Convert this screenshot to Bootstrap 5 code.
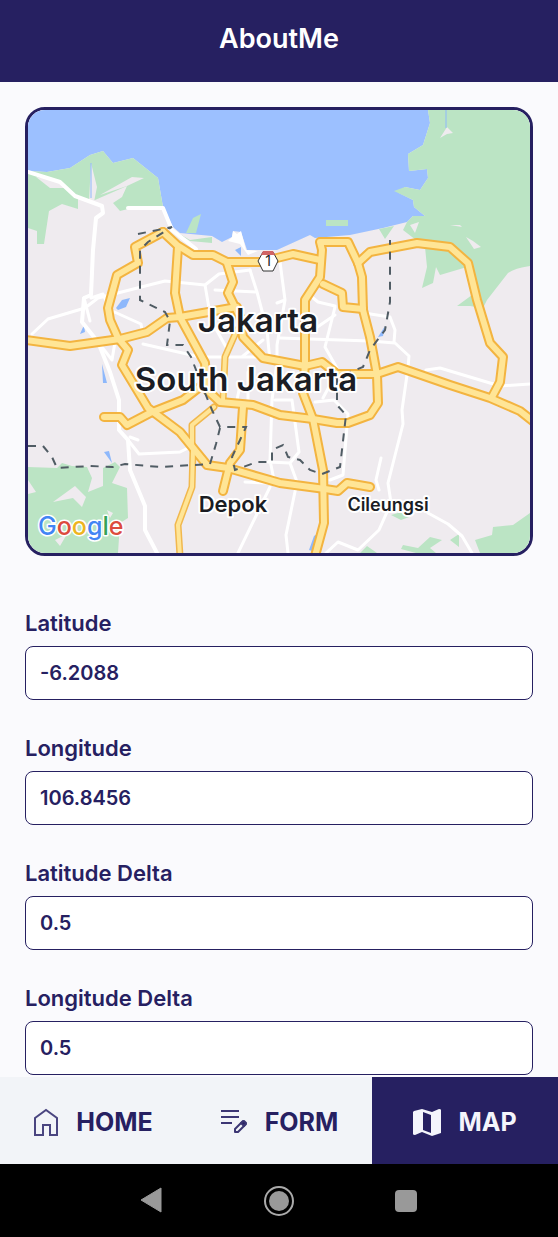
<!DOCTYPE html>
<html lang="en">
<head>
<meta charset="utf-8">
<meta name="viewport" content="width=device-width, initial-scale=1">
<title>AboutMe</title>
<link href="https://cdn.jsdelivr.net/npm/bootstrap@5.3.0/dist/css/bootstrap.min.css" rel="stylesheet">
<style>
:root { --navy: #262061; --page: #fafafd; --bar: #f2f4f8; }
body { font-family: Inter, "Noto Sans", sans-serif; color: var(--navy); background: var(--page); }
.app-header { background: var(--navy); height: 82px; padding-bottom: 4px; }
.app-header h1 { font-size: 27px; line-height: 32px; font-weight: 600; }
.screen { padding: 25px 25px 0; min-height: 0; }
.map-frame { border: 3px solid var(--navy); border-radius: 20px; margin-bottom: 55px; }
.map-frame svg { width: 100%; height: auto; }
.fields { gap: 36px; }
.form-label { font-size: 22px; line-height: 24px; font-weight: 600; margin-bottom: 11px; }
.form-control, .form-control:focus { color: var(--navy); background: #fff; border-color: var(--navy); border-radius: 8px; height: 54px; padding: 0 14px; font-size: 20px; font-weight: 600; }
.tabs { background: var(--bar); height: 87px; }
.tabs a { color: var(--navy); font-size: 25px; line-height: 32px; font-weight: 700; gap: 17px; padding-top: 2px; }
.tabs a.active { background: var(--navy); color: #f4f5fb; }
.system-bar { height: 73px; padding: 0 137px; }
.place { font-weight: 600; fill: #1b1d24; stroke: #fff; stroke-width: 4px; stroke-linejoin: round; paint-order: stroke; }
</style>
</head>
<body>
<div class="d-flex flex-column vh-100">
<header class="app-header flex-shrink-0 d-flex align-items-center justify-content-center text-white">
  <h1 class="m-0">AboutMe</h1>
</header>

<main class="screen flex-grow-1 overflow-auto">
  <div class="map-frame overflow-hidden">
    <svg class="d-block" viewBox="28 110 502 443" role="img" aria-label="Map of Jakarta">
      <defs>
        <g id="highways">
          <path d="M163 232L135 247L138 263L117 275L108 308L110 320L118 338L128 350L122 365L148 408L180 432L207 465L228 468L280 483L325 489L338 491L347 483L370 487"/>
          <path d="M163 232L177 245L193 255H213L227 262H262L277 258L293 254L320 260"/>
          <path d="M358 263L348 242H320L322 250L320 277L305 300V363L303 393L313 419L323 470L324 523L315 556"/>
          <path d="M358 263L370 252L417 243L450 247L468 263L477 300L490 343L503 357L500 382L492 397"/>
          <path d="M178 247L175 293L180 317L205 363L207 390L220 402L253 405L280 415L313 419L337 423H348L370 415L378 403L377 375L373 353L370 337L363 310L362 277L358 263"/>
          <path d="M26 340L70 346L120 339L147 332L167 318L180 317L237 307"/>
          <path d="M227 263L233 282L228 293L240 317L243 337L263 358L305 366L322 362L337 374L377 374L398 367L450 385L490 398L520 411L534 422"/>
          <path d="M323 284L342 293L343 307L363 309"/>
          <path d="M104 417H120L127 425L150 413L183 400L205 383"/>
          <path d="M243 407L240 450L230 463L223 491"/>
        </g>
        <g id="byways"><path d="M214 407L192 425V443L193 450L192 487L178 525L180 556M237 330L225 357L223 400"/></g>
      </defs>
      <path fill="#efebef" d="M28 110H530V553H28z"/>
      <path fill="#9cc0ff" d="M28 110V171L47 172L70 168L90 155L103 151L113 163L133 158L158 178L163 207L173 227L180 233L212 236L222 242L232 237L233 231L241 232L247 250H277L310 235L315 238L350 235L383 228L407 222L413 216H425L414 207L413 200L399 193L405 187L420 190L428 178L427 169L409 171L408 154L423 145L430 123L428 110z"/>
      <g fill="#bbe4c4">
        <path d="M28 171L47 172L70 168L90 155L103 151L113 163L133 158L158 178L163 207L140 206L120 211L113 203L122 197L127 186L95 200L78 198V209L62 204L49 211L44 244H37V231L28 228z"/>
        <path d="M428 110H530V266Q515 268 508 273L487 300L483 308L470 306H457L472 295L467 267L440 275L436 267L433 283L422 288L427 267L425 247L403 230L407 222L413 216H425L414 207L413 200L394 191L405 187L420 190L428 178L427 169L409 171L408 154L423 145L430 123z"/>
        <path d="M28 467L57 468L62 463L72 466L87 467L92 478L88 492L103 486V468L115 462L120 467L112 483L127 488L128 518L120 523L118 553H28z"/>
        <path d="M530 513L513 525L493 527L492 535L475 540L480 553H530zM391 515L405 511L412 516L401 520zM416 553L401 549L403 545L418 548L430 537L442 540L430 548L436 553zM450 540L459 534V547zM360 553L367 546L377 553z"/>
        <path d="M186 233L193 218L201 214L196 233zM176 232L190 240L212 237V243L190 241zM326 220h22v6h-22zM379 229L394 226L385 239z"/>
      </g>
      <g fill="#efebef">
        <path d="M91 163L97 187L94 202H89zM100 195L132 177L144 178L127 186zM36 177L60 180L66 188H50zM53 502L75 486L86 497L82 507L73 498zM28 480L36 492L28 494zM107 510L113 513L110 518zM55 540L67 534L60 546zM447 127L453 133L447 134L440 138zM410 225L419 222L415 233zM466 237L473 241L481 247L474 249zM450 225L460 225L462 227z"/>
      </g>
      <path fill="#8eb8fb" d="M116 308L122 300L130 298L126 307L118 310zM80 334L84 325L85 332zM102 364L107 383H103zM104 452L109 451L112 463zM235 250L241 247V256zM378 337L385 326L383 336zM309 550L314 536L317 534L312 551z"/>
      <path fill="none" stroke="#8eb8fb" d="M91 163V198M446 110V128"/>
      <g fill="none" stroke="#fff" stroke-width="3" stroke-linejoin="round" stroke-linecap="round">
        <path stroke-width="4" d="M28 172L60 182L75 196L102 206L103 213L96 218L93 250L91 295L84 298L82 322L98 342L110 372L119 400V430L128 440L130 470L145 506V530L157 553"/>
        <path d="M32 334L48 319L85 308L98 298L165 281L205 285L219 274L250 270M91 298L103 294L110 310L141 324L143 336M143 344L200 357H267"/>
        <path d="M84 298L90 321M98 342L112 360L115 342M128 440L139 454L180 452L190 447M130 437L138 440"/>
        <path d="M205 285L211 320L226 347M215 290L257 292M250 270L257 292L267 330L270 362M280 262L285 300L277 303M285 300L277 345V360M307 293L318 302L335 306M335 307L325 347L338 370L323 398M280 338L370 341L395 343L409 356L408 368L402 410L403 424L388 483L391 503L379 530L358 550L338 542L326 553"/>
        <path d="M240 385L236 405M248 372V400M263 340L243 356M277 362L272 400M272 400L270 460L275 485M275 400L292 400L299 452L290 463L297 482L286 535L288 553M245 482L268 483M268 462L290 463M364 313L390 317L395 330L394 342M426 370L440 368L500 386L530 384M381 458L376 480L379 490M270 487L238 553M428 513L448 524L462 536L472 553M315 402L334 400L348 414L343 475L330 480M313 330L335 315"/>
        <path stroke-width="4" d="M128 208L163 208L172 230L196 249"/>
      </g>
      <path fill="#fff" d="M232 237L233 231L237 234L241 231L246 250L258 251L248 255L240 244L228 241z"/>
      <g fill="none" stroke-linejoin="round" stroke-linecap="round">
        <use href="#byways" stroke="#f1b84e" stroke-width="7"/>
        <use href="#highways" stroke="#f3b440" stroke-width="10"/>
        <use href="#byways" stroke="#ffe596" stroke-width="4"/>
        <use href="#highways" stroke="#ffe596" stroke-width="6"/>
      </g>
      <path fill="none" stroke="#505c64" stroke-width="2" stroke-dasharray="8 7" d="M28 446H43L52 457L57 468L90 466L113 467L125 464L160 467L210 464L216 444L220 428M138 234L172 227L148 242L140 250V300L165 312L170 321L167 345H183L191 357L205 393L212 410L220 427H246L240 440L232 457L235 470L257 462H272V450L283 445L288 457L300 460L310 470L322 474L340 467L346 415L337 405V377L363 367L370 350L385 330L390 302V240"/>
      <path d="M263 252L273 252L278 261L273 271H263L258 261z" fill="#fff" stroke="#333" stroke-linejoin="round"/>
      <path fill="#d16464" d="M263 251H273L275 255H261z"/>
      <g text-anchor="middle">
        <text x="268" y="266" font-size="14" fill="#222">1</text>
        <text class="place" x="258" y="332" font-size="33">Jakarta</text>
        <text class="place" x="246" y="391" font-size="33">South Jakarta</text>
        <text class="place" x="233" y="512" font-size="22">Depok</text>
        <text class="place" x="388" y="511" font-size="18">Cileungsi</text>
      </g>
      <text x="38" y="535" font-size="25" font-weight="500" stroke="#fff" stroke-width="3" paint-order="stroke" stroke-linejoin="round"><tspan fill="#4285f4">G</tspan><tspan fill="#dc4b3e">o</tspan><tspan fill="#edb51f">o</tspan><tspan fill="#4285f4">g</tspan><tspan fill="#34a259">l</tspan><tspan fill="#dc4b3e">e</tspan></text>
    </svg>
  </div>

  <form class="fields d-flex flex-column">
    <div><label class="form-label d-block" for="lat">Latitude</label><input class="form-control" id="lat" type="text" value="-6.2088"></div>
    <div><label class="form-label d-block" for="lng">Longitude</label><input class="form-control" id="lng" type="text" value="106.8456"></div>
    <div><label class="form-label d-block" for="latd">Latitude Delta</label><input class="form-control" id="latd" type="text" value="0.5"></div>
    <div><label class="form-label d-block" for="lngd">Longitude Delta</label><input class="form-control" id="lngd" type="text" value="0.5"></div>
  </form>
</main>

<nav class="tabs nav nav-fill flex-nowrap flex-shrink-0" aria-label="Main">
  <a class="col d-flex align-items-center justify-content-center text-decoration-none" href="#home">
    <svg width="26" height="28" viewBox="0 0 26 28" fill="none" stroke="#4a4580" stroke-width="2" aria-hidden="true"><path d="M2 10L13 2L24 10V27H17V17H10V27H2z"/></svg>HOME</a>
  <a class="col d-flex align-items-center justify-content-center text-decoration-none" href="#form">
    <svg width="28" height="26" viewBox="0 0 28 26" fill="none" stroke="#3c3674" stroke-width="2" stroke-linejoin="round" aria-hidden="true"><path d="M1 2H19M1 8H19M1 14H12M15 23V20L23 12L26 15L18 23z"/><path fill="currentColor" d="M21 14L24 12L26 14L24 17z"/></svg>FORM</a>
  <a class="active col d-flex align-items-center justify-content-center text-decoration-none" href="#map" aria-current="page">
    <svg width="28" height="28" viewBox="0 0 28 28" aria-hidden="true"><path fill="currentColor" fill-rule="evenodd" d="M1 3L9 1L19 4L26 1Q28 1 28 2V25L19 28L9 24L2 27Q0 27 0 26V4zM10 4V22L18 25V7z"/></svg>MAP</a>
</nav>

<div class="system-bar bg-black flex-shrink-0 d-flex align-items-center justify-content-between">
  <button class="btn p-0 border-0 d-flex" type="button" aria-label="Back"><svg width="28" height="30" viewBox="0 0 28 30"><path fill="#999" stroke="#999" stroke-linejoin="round" d="M4 14L24 2V26z"/></svg></button>
  <button class="btn p-0 border-0 d-flex" type="button" aria-label="Home"><svg width="32" height="32" viewBox="0 0 32 32"><circle cx="16" cy="16" r="14" fill="none" stroke="#aaa" stroke-width="2"/><circle cx="16" cy="16" r="10" fill="#999"/></svg></button>
  <button class="btn p-0 border-0 d-flex" type="button" aria-label="Recent apps"><svg width="28" height="30" viewBox="0 0 28 30"><rect x="2" y="4" width="22" height="22" rx="4" fill="#999"/></svg></button>
</div>
</div>
<script src="https://cdn.jsdelivr.net/npm/bootstrap@5.3.0/dist/js/bootstrap.bundle.min.js"></script>
</body>
</html>
